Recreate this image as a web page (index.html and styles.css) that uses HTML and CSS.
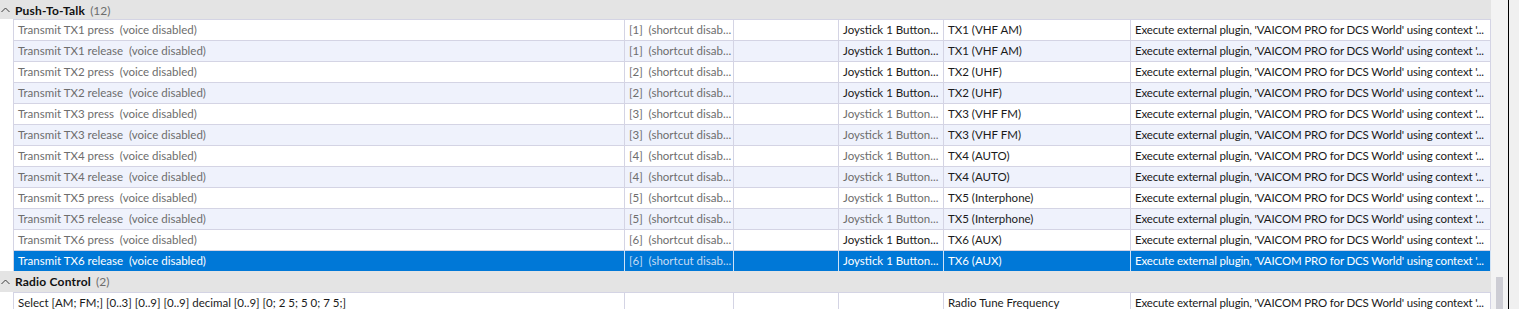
FILE: index.html
```html
<!DOCTYPE html>
<html>
<head>
<meta charset="utf-8">
<link rel="stylesheet" href="styles.css">
</head>
<body>
<div class="app">
  <div class="grid">
    <div class="group first">
      <svg class="chev" width="9" height="6" viewBox="0 0 9 6"><polyline points="0.5,5 4.5,1 8.5,5" fill="none" stroke="#3c3c3c" stroke-width="1"/></svg>
      <span class="gname">Push-To-Talk</span><span class="gcount">(12)</span>
    </div>

    <div class="row">
      <div class="gut"></div>
      <div class="c c1 dim">Transmit TX1 press  (voice disabled)</div>
      <div class="c c2 dim">[1]  (shortcut disab...</div>
      <div class="c c3"></div>
      <div class="c c4">Joystick 1 Button...</div>
      <div class="c c5">TX1 (VHF AM)</div>
      <div class="c c6">Execute external plugin, 'VAICOM PRO for DCS World' using context '...</div>
    </div>
    <div class="row alt">
      <div class="gut"></div>
      <div class="c c1 dim">Transmit TX1 release  (voice disabled)</div>
      <div class="c c2 dim">[1]  (shortcut disab...</div>
      <div class="c c3"></div>
      <div class="c c4">Joystick 1 Button...</div>
      <div class="c c5">TX1 (VHF AM)</div>
      <div class="c c6">Execute external plugin, 'VAICOM PRO for DCS World' using context '...</div>
    </div>
    <div class="row">
      <div class="gut"></div>
      <div class="c c1 dim">Transmit TX2 press  (voice disabled)</div>
      <div class="c c2 dim">[2]  (shortcut disab...</div>
      <div class="c c3"></div>
      <div class="c c4">Joystick 1 Button...</div>
      <div class="c c5">TX2 (UHF)</div>
      <div class="c c6">Execute external plugin, 'VAICOM PRO for DCS World' using context '...</div>
    </div>
    <div class="row alt">
      <div class="gut"></div>
      <div class="c c1 dim">Transmit TX2 release  (voice disabled)</div>
      <div class="c c2 dim">[2]  (shortcut disab...</div>
      <div class="c c3"></div>
      <div class="c c4">Joystick 1 Button...</div>
      <div class="c c5">TX2 (UHF)</div>
      <div class="c c6">Execute external plugin, 'VAICOM PRO for DCS World' using context '...</div>
    </div>
    <div class="row">
      <div class="gut"></div>
      <div class="c c1 dim">Transmit TX3 press  (voice disabled)</div>
      <div class="c c2 dim">[3]  (shortcut disab...</div>
      <div class="c c3"></div>
      <div class="c c4 dim">Joystick 1 Button...</div>
      <div class="c c5">TX3 (VHF FM)</div>
      <div class="c c6">Execute external plugin, 'VAICOM PRO for DCS World' using context '...</div>
    </div>
    <div class="row alt">
      <div class="gut"></div>
      <div class="c c1 dim">Transmit TX3 release  (voice disabled)</div>
      <div class="c c2 dim">[3]  (shortcut disab...</div>
      <div class="c c3"></div>
      <div class="c c4 dim">Joystick 1 Button...</div>
      <div class="c c5">TX3 (VHF FM)</div>
      <div class="c c6">Execute external plugin, 'VAICOM PRO for DCS World' using context '...</div>
    </div>
    <div class="row">
      <div class="gut"></div>
      <div class="c c1 dim">Transmit TX4 press  (voice disabled)</div>
      <div class="c c2 dim">[4]  (shortcut disab...</div>
      <div class="c c3"></div>
      <div class="c c4 dim">Joystick 1 Button...</div>
      <div class="c c5">TX4 (AUTO)</div>
      <div class="c c6">Execute external plugin, 'VAICOM PRO for DCS World' using context '...</div>
    </div>
    <div class="row alt">
      <div class="gut"></div>
      <div class="c c1 dim">Transmit TX4 release  (voice disabled)</div>
      <div class="c c2 dim">[4]  (shortcut disab...</div>
      <div class="c c3"></div>
      <div class="c c4 dim">Joystick 1 Button...</div>
      <div class="c c5">TX4 (AUTO)</div>
      <div class="c c6">Execute external plugin, 'VAICOM PRO for DCS World' using context '...</div>
    </div>
    <div class="row">
      <div class="gut"></div>
      <div class="c c1 dim">Transmit TX5 press  (voice disabled)</div>
      <div class="c c2 dim">[5]  (shortcut disab...</div>
      <div class="c c3"></div>
      <div class="c c4 dim">Joystick 1 Button...</div>
      <div class="c c5">TX5 (Interphone)</div>
      <div class="c c6">Execute external plugin, 'VAICOM PRO for DCS World' using context '...</div>
    </div>
    <div class="row alt">
      <div class="gut"></div>
      <div class="c c1 dim">Transmit TX5 release  (voice disabled)</div>
      <div class="c c2 dim">[5]  (shortcut disab...</div>
      <div class="c c3"></div>
      <div class="c c4 dim">Joystick 1 Button...</div>
      <div class="c c5">TX5 (Interphone)</div>
      <div class="c c6">Execute external plugin, 'VAICOM PRO for DCS World' using context '...</div>
    </div>
    <div class="row">
      <div class="gut"></div>
      <div class="c c1 dim">Transmit TX6 press  (voice disabled)</div>
      <div class="c c2 dim">[6]  (shortcut disab...</div>
      <div class="c c3"></div>
      <div class="c c4">Joystick 1 Button...</div>
      <div class="c c5">TX6 (AUX)</div>
      <div class="c c6">Execute external plugin, 'VAICOM PRO for DCS World' using context '...</div>
    </div>
    <div class="row sel">
      <div class="gut"></div>
      <div class="c c1">Transmit TX6 release  (voice disabled)</div>
      <div class="c c2 dim">[6]  (shortcut disab...</div>
      <div class="c c3"></div>
      <div class="c c4">Joystick 1 Button...</div>
      <div class="c c5">TX6 (AUX)</div>
      <div class="c c6">Execute external plugin, 'VAICOM PRO for DCS World' using context '...</div>
    </div>

    <div class="group">
      <svg class="chev" width="9" height="6" viewBox="0 0 9 6"><polyline points="0.5,5 4.5,1 8.5,5" fill="none" stroke="#3c3c3c" stroke-width="1"/></svg>
      <span class="gname">Radio Control</span><span class="gcount">(2)</span>
    </div>
    <div class="row">
      <div class="gut"></div>
      <div class="c c1">Select [AM; FM;] [0..3] [0..9] [0..9] decimal [0..9] [0; 2 5; 5 0; 7 5;]</div>
      <div class="c c2"></div>
      <div class="c c3"></div>
      <div class="c c4"></div>
      <div class="c c5">Radio Tune Frequency</div>
      <div class="c c6">Execute external plugin, 'VAICOM PRO for DCS World' using context '...</div>
    </div>
  </div>
  <div class="scrollbar">
    <div class="track"><div class="thumb"></div></div>
    <div class="edge"></div>
    <div class="rest"></div>
  </div>
</div>
</body>
</html>
```

FILE: styles.css
```css
html, body {
  margin: 0;
  padding: 0;
  background: #ffffff;
}
body {
  font-family: "Segoe UI", Lato, "Noto Sans", sans-serif;
  font-size: 11.5px;
  color: #1a1a1a;
}
.app {
  display: flex;
  width: 1519px;
  height: 309px;
  overflow: hidden;
}
.grid {
  width: 1491px;
  flex: none;
}
.group {
  height: 21px;
  background: #e4e4e4;
  display: flex;
  align-items: center;
  line-height: 21px;
  white-space: nowrap;
  font-size: 12px;
}
.group.first {
  height: 19px;
  align-items: flex-start;
}
.group.first .chev {
  margin-top: 7px;
}
.chev {
  margin-left: 1px;
  margin-right: 5px;
  flex: none;
}
.gname {
  font-weight: bold;
  color: #111;
  letter-spacing: 0.2px;
}
.gcount {
  margin-left: 5px;
  color: #6d6d6d;
}
.row {
  display: flex;
  height: 21px;
}
.gut {
  width: 13px;
  border-right: 1px solid #d4d4e4;
  background: #fff;
  flex: none;
}
.c {
  box-sizing: border-box;
  height: 21px;
  border-top: 1px solid #d4d4e4;
  border-right: 1px solid #d4d4e4;
  padding: 0 4px;
  line-height: 19px;
  white-space: pre;
  overflow: hidden;
  flex: none;
  background: #fff;
}
.row.alt .c {
  background: #eff2fc;
}
.c1 { width: 611px; }
.c2 { width: 109px; }
.c3 { width: 105px; }
.c4 { width: 105px; }
.c5 { width: 187px; }
.c6 { width: 360px; letter-spacing: -0.15px; }
.dim {
  color: #6d6d6d;
}
.row.sel .c {
  background: #0078d7;
  color: #ffffff;
  border-right-color: #cfe2f6;
}
.row.sel .c.dim {
  color: #c6dcf3;
}
.scrollbar {
  flex: 1;
  display: flex;
  height: 309px;
}
.track {
  width: 17px;
  background: #f3f3f3;
  flex: none;
}
.thumb {
  margin-top: 277px;
  margin-left: 5px;
  width: 7px;
  height: 40px;
  background: #cdcdd4;
}
.edge {
  width: 1px;
  background: #000;
  flex: none;
}
.rest {
  flex: 1;
  background: #f0f0f0;
}
```
